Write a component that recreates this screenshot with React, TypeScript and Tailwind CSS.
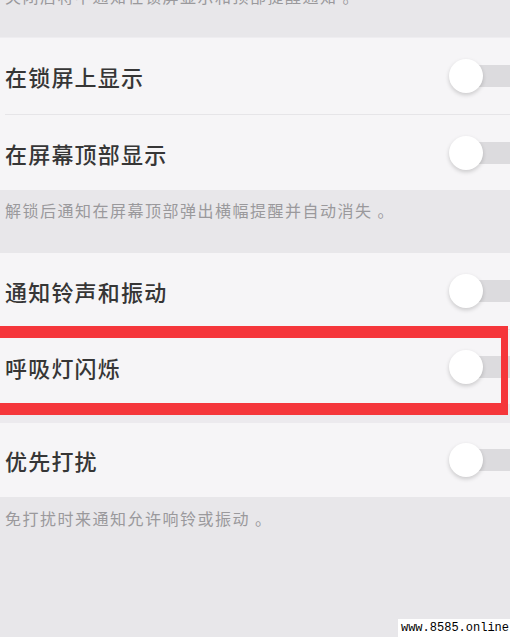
import React from "react";

const cjk = { fontFamily: '"Noto Sans CJK SC", "Noto Sans", sans-serif' };

function Toggle() {
  return (
    <div className="relative h-[34px] w-[61px] shrink-0">
      <div className="absolute left-[12px] top-[6px] h-[22px] w-[72px] rounded-full bg-[#dcdbde]" />
      <div className="relative h-[34px] w-[34px] rounded-full bg-white shadow-[0_2px_4px_rgba(0,0,0,0.18)]" />
    </div>
  );
}

function Row({ label, height }: { label: string; height: string }) {
  return (
    <div className={`flex items-center pl-[5px] ${height}`}>
      <span className="flex-1 text-[22px] font-medium leading-none tracking-[1.2px] text-[#363636]">{label}</span>
      <Toggle />
    </div>
  );
}

export default function App() {
  return (
    <div className="relative h-[637px] w-[510px] overflow-hidden bg-[#e8e7ea]" style={cjk}>
      <div className="h-[38px] overflow-hidden border-b border-[#eeedf0]">
        <p className="-mt-[14px] pl-[5px] text-[16px] leading-[20px] tracking-[1.5px] text-[#9a999c]">
          关闭后将不通知在锁屏显示和顶部提醒通知 。
        </p>
      </div>

      <section className="bg-[#f6f5f7]">
        <Row label="在锁屏上显示" height="h-[76px]" />
        <div className="ml-[5px] h-px bg-[#e6e5e8]" />
        <Row label="在屏幕顶部显示" height="h-[75px]" />
      </section>

      <div className="h-[63px] pl-[5px] pt-[10px]">
        <p className="text-[16px] leading-[20px] tracking-[1.5px] text-[#9a999c]">解锁后通知在屏幕顶部弹出横幅提醒并自动消失 。</p>
      </div>

      <section className="bg-[#f6f5f7]">
        <Row label="通知铃声和振动" height="h-[76px]" />
        <div className="ml-[5px] h-px bg-[#e6e5e8]" />
        <Row label="呼吸灯闪烁" height="h-[74px]" />
      </section>

      <div className="h-[19px] bg-[#eceaee]" />

      <section className="bg-[#f6f5f7]">
        <Row label="优先打扰" height="h-[74px]" />
      </section>

      <div className="pl-[5px] pt-[11px]">
        <p className="text-[16px] leading-[20px] tracking-[1.5px] text-[#9a999c]">免打扰时来通知允许响铃或振动 。</p>
      </div>

      <div className="absolute left-[-12px] top-[326px] h-[89px] w-[520px] border-[12px] border-r-[7px] border-[#f5363b]" />

      <div
        className="absolute bottom-0 right-0 bg-white pl-[3px] pr-[1px] text-[12px] leading-[18px] text-black"
        style={{ fontFamily: '"Liberation Mono", "DejaVu Sans Mono", monospace' }}
      >
        www.8585.online
      </div>
    </div>
  );
}
